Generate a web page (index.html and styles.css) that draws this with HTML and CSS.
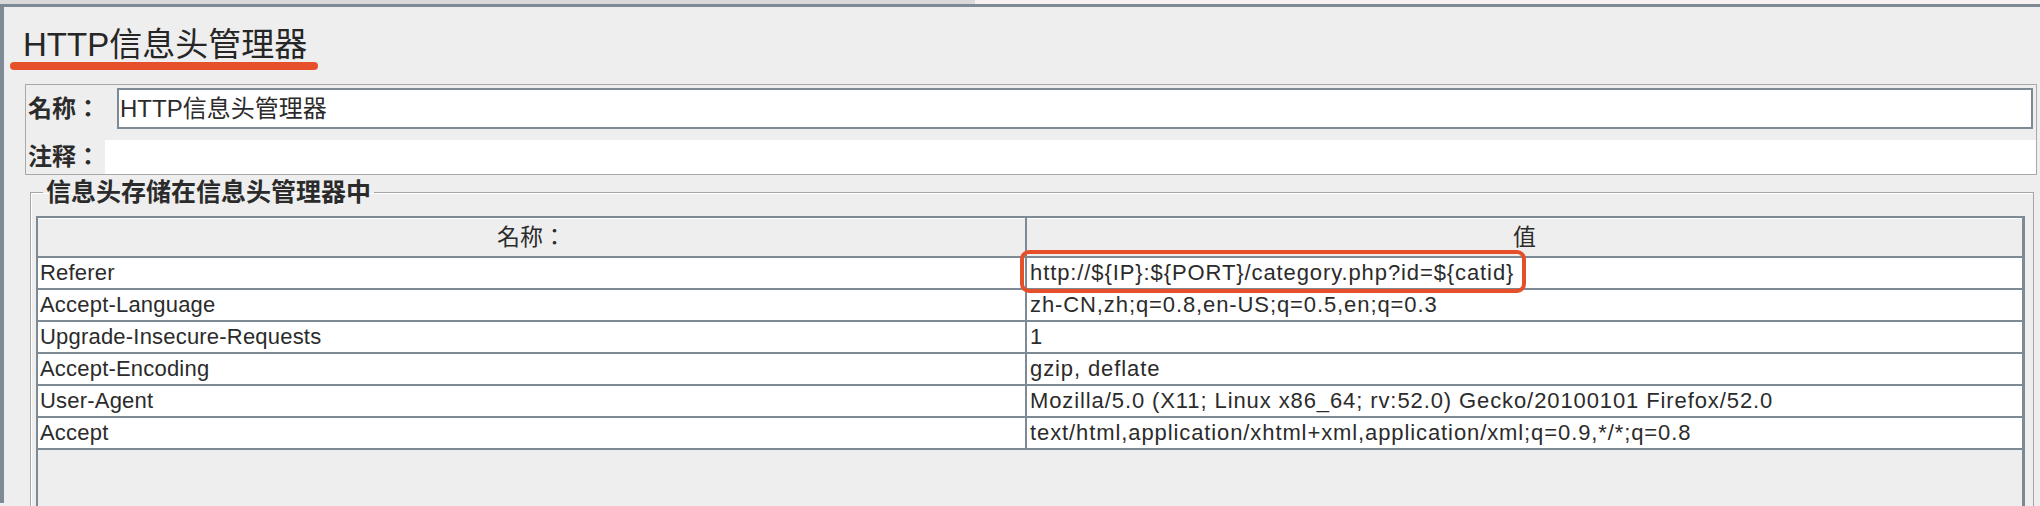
FILE: index.html
```html
<!DOCTYPE html>
<html lang="zh-CN">
<head>
<meta charset="utf-8">
<title>HTTP信息头管理器</title>
<link rel="stylesheet" href="styles.css">
</head>
<body>
<div class="topstrip"></div>
<div class="frame">
  <div class="title-bar"><h1 class="title">HTTP信息头管理器</h1></div>
  <div class="namebox">
    <div class="row name-row"><span class="label name-label">名称：</span><div class="input">HTTP信息头管理器</div></div>
    <div class="row comment-row"><span class="label comment-label">注释：</span><div class="textarea"></div></div>
  </div>
  <fieldset class="group">
    <legend>信息头存储在信息头管理器中</legend>
    <div class="table">
      <div class="thead"><div class="th">名称：</div><div class="th">值</div></div>
      <div class="tr"><div class="td">Referer</div><div class="td val">http://${IP}:${PORT}/category.php?id=${catid}</div></div>
      <div class="tr"><div class="td">Accept-Language</div><div class="td val">zh-CN,zh;q=0.8,en-US;q=0.5,en;q=0.3</div></div>
      <div class="tr"><div class="td">Upgrade-Insecure-Requests</div><div class="td val">1</div></div>
      <div class="tr"><div class="td">Accept-Encoding</div><div class="td val">gzip, deflate</div></div>
      <div class="tr"><div class="td">User-Agent</div><div class="td val">Mozilla/5.0 (X11; Linux x86_64; rv:52.0) Gecko/20100101 Firefox/52.0</div></div>
      <div class="tr"><div class="td">Accept</div><div class="td val">text/html,application/xhtml+xml,application/xml;q=0.9,*/*;q=0.8</div></div>
    </div>
  </fieldset>
</div>
<div class="mark-underline"></div>
<div class="mark-box"></div>
</body>
</html>
```
FILE: styles.css
```css
html, body {
  margin: 0;
  height: 506px;
  overflow: hidden;
  background: #eeeeee;
}
body {
  position: relative;
  font-family: "Liberation Sans", "Noto Sans CJK SC", sans-serif;
  color: #2b2b2b;
}
.topstrip {
  height: 4px;
  background: linear-gradient(to right, #d9d9d9 975px, #f6f2f2 975px);
}
.frame {
  border-top: 3px solid #7d8995;
  border-left: 4px solid #7d8995;
  height: 499px;
  box-sizing: border-box;
}
.title-bar {
  padding: 18px 0 0 19px;
  height: 59px;
}
.title {
  margin: 0;
  font-size: 33px;
  font-weight: normal;
  line-height: 40px;
  color: #262626;
}
.namebox {
  margin: 0 3px 0 21px;
  border: 1px solid #a9a9a9;
  padding: 3px 0 0 2px;
}
.row {
  display: flex;
  align-items: center;
}
.label, .th {
  font-family: "Liberation Sans", "Noto Sans CJK TC", sans-serif;
  font-feature-settings: "locl" 0;
}
.label {
  font-size: 24px;
  font-weight: bold;
  line-height: 30px;
  color: #2b2b2b;
}
.name-label { width: 89px; }
.comment-label { width: 77px; }
.input {
  flex: 1;
  height: 41px;
  box-sizing: border-box;
  margin-right: 3px;
  border: 2px solid #7d8995;
  background: #fff;
  font-size: 24px;
  line-height: 37px;
  padding-left: 1px;
}
.comment-row {
  margin-top: 11px;
}
.textarea {
  flex: 1;
  height: 34px;
  background: #fff;
}
.group {
  margin: 4px 6px 0 26px;
  border: 1px solid #a6a6a6;
  box-shadow: inset 1px 1px 0 #ffffff;
  padding: 11px 8px 0 5px;
  height: 400px;
  min-width: 0;
}
.group legend {
  margin-left: 7px;
  padding: 0 3px;
  font-size: 25px;
  font-weight: bold;
  line-height: 26px;
  color: #2b2b2b;
}
.table {
  border-top: 2px solid #7d8995;
  border-left: 2px solid #7d8995;
  border-right: 3px solid #7d8995;
  background: #eeeeee;
  height: 360px;
}
.thead, .tr {
  display: grid;
  grid-template-columns: 989px 1fr;
}
.th {
  height: 38px;
  line-height: 38px;
  text-align: center;
  font-size: 23px;
  background: #eeeeee;
  box-shadow: inset 0 1px 0 #ffffff;
  border-bottom: 2px solid #7d8995;
}
.th:first-child, .td:first-child {
  border-right: 2px solid #7d8995;
}
.td {
  height: 30px;
  line-height: 30px;
  font-size: 22px;
  background: #fff;
  border-bottom: 2px solid #7d8995;
  padding-left: 2px;
  white-space: nowrap;
  overflow: hidden;
  letter-spacing: 0.2px;
}
.td.val {
  padding-left: 3px;
  letter-spacing: 0.9px;
}
.mark-underline {
  position: absolute;
  left: 10px;
  top: 62px;
  width: 308px;
  height: 8px;
  border-radius: 4px;
  background: #e5502b;
}
.mark-box {
  position: absolute;
  left: 1020px;
  top: 250px;
  width: 498px;
  height: 35px;
  border: 4px solid #e5502b;
  border-radius: 9px;
}
```
